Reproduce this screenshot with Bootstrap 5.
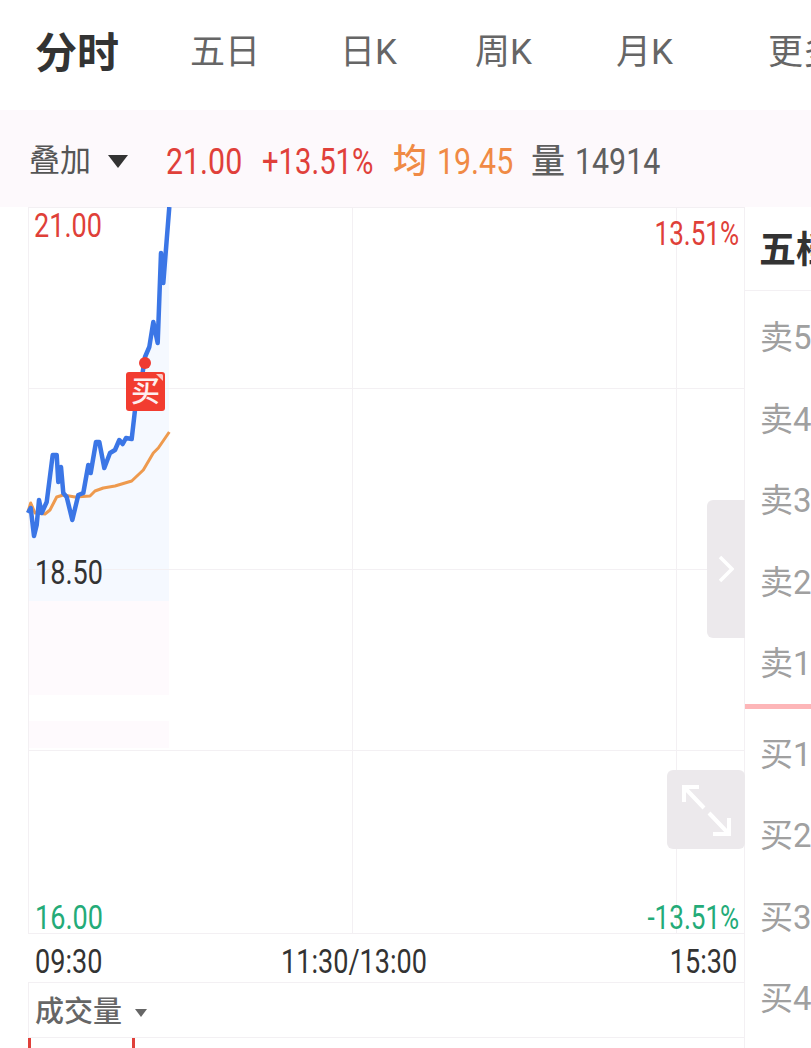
<!DOCTYPE html>
<html lang="zh-CN">
<head>
    <meta charset="UTF-8">
    <meta name="viewport" content="width=device-width, initial-scale=1.0">
    <title>分时</title>
    <link href="https://cdn.jsdelivr.net/npm/bootstrap@5.3.0/dist/css/bootstrap.min.css" rel="stylesheet">
    <style>
        html, body {
            height: 1048px;
            overflow: hidden;
        }
        body {
            background: #fff;
            font-family: Roboto, "Noto Sans CJK SC", sans-serif;
        }
        /* the digits in the picture are a narrow DIN style face */
        .num-narrow {
            display: inline-block;
            white-space: nowrap;
            transform: scaleX(0.82);
            transform-origin: left center;
        }
        .num-pct { transform: scaleX(0.79); }
        .num-right { transform-origin: right center; }
        .num-center { transform-origin: center center; }
        .tab-row {
            height: 110px;
            padding-left: 35px;
            padding-bottom: 3px;
            white-space: nowrap;
        }
        .tab-row span {
            flex: none;
        }
        .tab-item {
            font-size: 35px;
            color: #666;
        }
        .tab-active {
            font-size: 42px;
            font-weight: 700;
            color: #333;
            width: 155px;
        }
        .tab-w1 { width: 150px; }
        .tab-w2 { width: 135px; }
        .tab-w3 { width: 141px; }
        .tab-w4 { width: 152px; }
        .info-bar {
            height: 97px;
            background: #fdf9fc;
            padding: 6px 0 0 29px;
            font-size: 37px;
            white-space: nowrap;
        }
        .info-bar > span {
            flex: none;
        }
        .overlay-label {
            color: #555;
            font-size: 31px;
            width: 79px;
        }
        .caret-big {
            width: 0;
            height: 0;
            border-left: 10px solid transparent;
            border-right: 10px solid transparent;
            border-top: 13px solid #333;
            margin-right: 38px;
        }
        .bar-cjk {
            font-size: 34px;
            font-weight: 500;
            width: 44px;
        }
        .up-text { color: #e0403a; }
        .avg-text { color: #f08a45; }
        .vol-text { color: #5f5f5f; }
        .slot-price { width: 96px; }
        .slot-pct { width: 131px; }
        .slot-avg { width: 94px; }
        .chart-col {
            width: 744px;
            flex: none;
        }
        .chart-box {
            height: 727px;
        }
        .chart-box svg {
            display: block;
        }
        .axis-label {
            font-size: 33px;
            line-height: 1;
        }
        .lb-high { left: 34px; top: 2px; color: #df4038; }
        .lb-pct-high { right: 5px; top: 10px; color: #df4038; }
        .lb-mid { left: 35px; top: 349px; color: #333; }
        .lb-low { left: 35px; top: 694px; color: #24ab78; }
        .lb-pct-low { right: 5px; top: 694px; color: #24ab78; }
        .side-handle {
            left: 707px;
            top: 293px;
            width: 38px;
            height: 138px;
            background: #ece9ec;
            border-radius: 6px 0 0 6px;
        }
        .expand-btn {
            left: 667px;
            top: 563px;
            width: 78px;
            height: 79px;
            background: #ece9ec;
            border-radius: 6px;
        }
        .time-row {
            height: 48px;
            padding-top: 8px;
            padding-left: 35px;
            padding-right: 7px;
            font-size: 33px;
            color: #333;
        }
        .time-left { width: 66px; }
        .time-right { width: 130px; }
        .vol-panel {
            margin-left: 28px;
            height: 66px;
            border-top: 1px solid #f3f0f3;
            border-left: 1px solid #f3f0f3;
            padding-left: 6px;
        }
        .vol-title {
            font-size: 29px;
            font-weight: 500;
            color: #666;
            height: 54px;
            padding-top: 6px;
        }
        .caret-small {
            width: 0;
            height: 0;
            border-left: 6px solid transparent;
            border-right: 6px solid transparent;
            border-top: 8px solid #666;
            margin-left: 13px;
        }
        .vol-base {
            left: -1px;
            right: 0;
            top: 54px;
            height: 12px;
            border-top: 1px solid #f3f0f3;
        }
        .vol-tick {
            top: 0;
            width: 3px;
            height: 12px;
            background: #e0403a;
        }
        .tick-a { left: 0; }
        .tick-b { left: 104px; }
        .side-col {
            flex: 1;
            min-width: 0;
            border-left: 1px solid #f3f0f3;
            overflow: hidden;
            white-space: nowrap;
        }
        .side-head {
            height: 84px;
            padding: 16px 0 0 14px;
            font-size: 37px;
            font-weight: 700;
            color: #333;
            border-bottom: 1px solid #f3f0f3;
        }
        .side-rows {
            padding-top: 5px;
        }
        .side-row {
            height: 81.5px;
            padding-top: 2px;
            padding-left: 15px;
            font-size: 33px;
            color: #a0a0a0;
        }
        .side-split {
            height: 5px;
            background: #fdb6b8;
            margin-bottom: 4px;
        }
    </style>
</head>
<body>
    <nav class="tab-row d-flex align-items-center">
        <span class="tab-active">分时</span>
        <span class="tab-item tab-w1">五日</span>
        <span class="tab-item tab-w2">日K</span>
        <span class="tab-item tab-w3">周K</span>
        <span class="tab-item tab-w4">月K</span>
        <span class="tab-item">更多</span>
    </nav>

    <div class="info-bar d-flex align-items-center">
        <span class="overlay-label">叠加</span>
        <span class="caret-big"></span>
        <span class="up-text slot-price"><span class="num-narrow">21.00</span></span>
        <span class="up-text slot-pct"><span class="num-narrow num-pct">+13.51%</span></span>
        <span class="avg-text bar-cjk">均</span>
        <span class="avg-text slot-avg"><span class="num-narrow">19.45</span></span>
        <span class="vol-text bar-cjk">量</span>
        <span class="vol-text"><span class="num-narrow">14914</span></span>
    </div>

    <div class="d-flex">
        <div class="chart-col">
            <div class="chart-box position-relative">
                <svg width="745" height="727" viewBox="0 207 745 727">
                    <polygon fill="#f5f9ff" points="28,513 30.7,508 34,536 36.7,525 39,500 41.7,513 46.7,502 52.7,455 56.7,455 58.3,482 61,467 63.3,493 66.7,497 72.3,520 78.3,495 83.3,493 88.3,465 90.7,473 96,442 99.3,442 104.3,468 110,453 115,450 119.3,440 122.7,444 126,438 131.7,439 135,410 140,390 145,357 149.3,347 153.3,322 157.7,343 161,253 163.3,283 169,207 169,601 28,601"/>
                    <rect x="28" y="601" width="141" height="94" fill="#fefafd"/>
                    <rect x="28" y="721" width="141" height="27" fill="#fefafd"/>
                    <g stroke="#f3f0f3" stroke-width="1" fill="none">
                        <path d="M28 207.500H745M28 388.500H745M28 569.500H745M28 750.500H745M28 933.500H745"/>
                        <path d="M28.500 207V934M352.500 207V934M676.500 207V934"/>
                    </g>
                    <polyline fill="none" stroke="#ee9a4e" stroke-width="3" stroke-linejoin="round" points="28,512 30.7,503 35,513 45,514 50,510 56.7,497 63.3,495 75,497 90,496 95,491 103.3,488 115,486 125,483 131.7,481 143.3,470 153.3,453 158.3,448 169.3,432"/>
                    <polyline fill="none" stroke="#3b76e6" stroke-width="4.500" stroke-linejoin="round" points="28,513 30.7,508 34,536 36.7,525 39,500 41.7,513 46.7,502 52.7,455 56.7,455 58.3,482 61,467 63.3,493 66.7,497 72.3,520 78.3,495 83.3,493 88.3,465 90.7,473 96,442 99.3,442 104.3,468 110,453 115,450 119.3,440 122.7,444 126,438 131.7,439 135,410 140,390 145,357 149.3,347 153.3,322 157.7,343 161,253 163.3,283 169.3,207"/>
                    <circle cx="145" cy="363" r="6" fill="#ef3b32"/>
                    <rect x="126" y="372" width="39" height="39" rx="3" fill="#f23c30"/>
                    <path d="M156 374H161.500Q163 374 163 375.500V381Z" fill="#fbc9c4"/>
                    <text x="145.500" y="402" text-anchor="middle" font-size="29" font-weight="500" fill="#fdeeee" font-family="Noto Sans CJK SC">买</text>
                </svg>
                <span class="axis-label num-narrow position-absolute lb-high">21.00</span>
                <span class="axis-label num-narrow num-pct num-right position-absolute lb-pct-high">13.51%</span>
                <span class="axis-label num-narrow position-absolute lb-mid">18.50</span>
                <span class="axis-label num-narrow position-absolute lb-low">16.00</span>
                <span class="axis-label num-narrow num-pct num-right position-absolute lb-pct-low">-13.51%</span>
                <div class="side-handle position-absolute d-flex align-items-center justify-content-center">
                    <svg width="16" height="28" viewBox="0 0 16 28">
                        <path d="M2 2L14 14L2 26" fill="none" stroke="#fff" stroke-width="3.500"/>
                    </svg>
                </div>
                <div class="expand-btn position-absolute">
                    <svg width="78" height="79" viewBox="667 770 78 79">
                        <g fill="none" stroke="#fff" stroke-width="4">
                            <path d="M684 787L704 808M684 802V787H699"/>
                            <path d="M709 813L729 834M729 818V834H713"/>
                        </g>
                    </svg>
                </div>
            </div>
            <div class="time-row d-flex align-items-center">
                <span class="time-left"><span class="num-narrow">09:30</span></span>
                <span class="flex-grow-1 text-center"><span class="num-narrow num-center">11:30/13:00</span></span>
                <span class="time-right text-end"><span class="num-narrow num-right">15:30</span></span>
            </div>
            <div class="vol-panel position-relative">
                <div class="vol-title d-flex align-items-center">成交量<span class="caret-small"></span></div>
                <div class="vol-base position-absolute">
                    <span class="vol-tick position-absolute tick-a"></span>
                    <span class="vol-tick position-absolute tick-b"></span>
                </div>
            </div>
        </div>
        <div class="side-col">
            <div class="side-head">五档</div>
            <div class="side-rows">
                <div class="side-row d-flex align-items-center">卖5</div>
                <div class="side-row d-flex align-items-center">卖4</div>
                <div class="side-row d-flex align-items-center">卖3</div>
                <div class="side-row d-flex align-items-center">卖2</div>
                <div class="side-row d-flex align-items-center">卖1</div>
            </div>
            <div class="side-split"></div>
            <div class="side-row d-flex align-items-center">买1</div>
            <div class="side-row d-flex align-items-center">买2</div>
            <div class="side-row d-flex align-items-center">买3</div>
            <div class="side-row d-flex align-items-center">买4</div>
        </div>
    </div>
    <script src="https://cdn.jsdelivr.net/npm/bootstrap@5.3.0/dist/js/bootstrap.bundle.min.js"></script>
</body>
</html>
